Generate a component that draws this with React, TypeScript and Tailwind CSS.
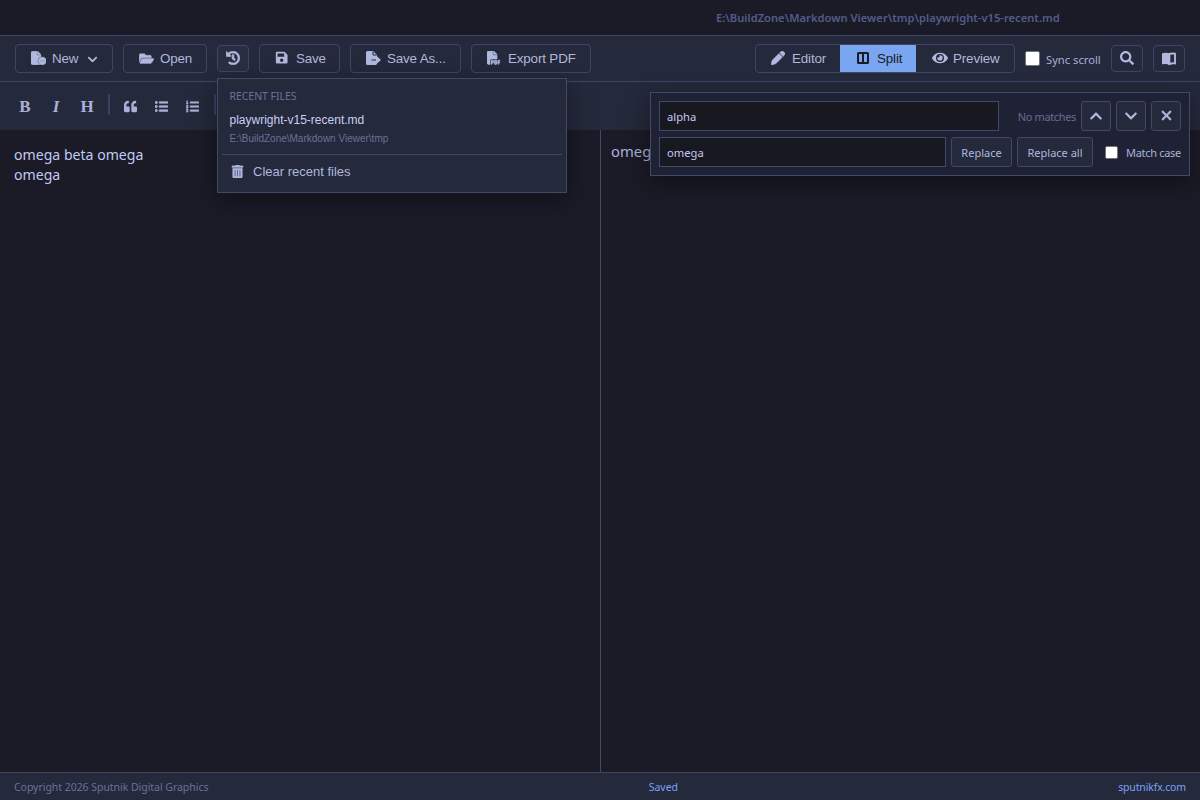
import { useState } from 'react'
import type { ReactNode } from 'react'
import { FaFileCircleMinus, FaFilePdf, FaPen, FaXmark } from 'react-icons/fa6'
import {
  FaChevronDown, FaChevronUp, FaEye, FaFolderOpen, FaHistory, FaListOl, FaListUl,
  FaQuoteLeft, FaSave, FaSearch, FaTrashAlt,
} from 'react-icons/fa'
import clsx from 'clsx'

const RECENT_DIR = 'E:\\BuildZone\\Markdown Viewer\\tmp'
const RECENT_FILE = 'playwright-v15-recent.md'

// ─── Icons the pack lacks ────────────────────────────────────────────────────
function SplitIcon() {
  return (
    <svg viewBox="0 0 12 12" className="-mt-0.5 h-3 w-3" fill="none" stroke="currentColor" strokeWidth="2" aria-hidden>
      <rect x="1" y="1" width="10" height="10" rx="0.6" />
      <path d="M6 1v10" />
    </svg>
  )
}

function ReaderIcon() {
  return (
    <svg viewBox="0 0 14 14" className="h-3.5 w-3.5" aria-hidden>
      <path d="M0 1.3Q4 0 7.5 1.3V12.7Q4 11.4 0 12.2Z" fill="currentColor" />
      <path d="M7.4 2Q10 1.2 13 1.8V11.4Q10 11 7.4 12Z" fill="none" stroke="currentColor" strokeWidth="1.9" />
    </svg>
  )
}

function SaveAsIcon() {
  return (
    <svg viewBox="0 0 15 14" className="h-3.5 w-[15px] shrink-0" aria-hidden>
      <path d="M1.5 0H7L11 4V5.2L15 9L11 12.6Q11 14 9.5 14H1.5Q0 14 0 12.5V1.5Q0 0 1.5 0Z" fill="currentColor" />
      <path d="M7 .5V4H10.6M5.5 9H10" fill="none" stroke="#24293b" strokeWidth="1" />
    </svg>
  )
}

// ─── Shared controls ─────────────────────────────────────────────────────────
function ToolButton({ icon, className, children }: { icon: ReactNode; className: string; children: ReactNode }) {
  return (
    <button className={clsx('flex h-[29px] shrink-0 items-center gap-[7px] whitespace-nowrap rounded border border-[#3f4663] pl-[15px] pt-px text-[13.4px] tracking-[-0.15px] text-[#b0b8dd]', className)}>
      <span className="-mt-0.5 flex w-3.5 justify-center">{icon}</span>
      {children}
    </button>
  )
}

function IconButton({ label, className, children }: { label: string; className?: string; children: ReactNode }) {
  return (
    <button aria-label={label} className={clsx('flex h-[27px] w-8 shrink-0 items-center justify-center rounded border border-[#3f4663] text-sm text-[#b0b8dd]', className)}>
      {children}
    </button>
  )
}

function CheckBox({ checked, onChange, className }: { checked: boolean; onChange: () => void; className: string }) {
  return (
    <button
      role="checkbox"
      aria-checked={checked}
      onClick={onChange}
      className={clsx('shrink-0 rounded-[2px] border border-[#767676]', checked ? 'bg-[#7aa2f7]' : 'bg-white', className)}
    />
  )
}

// ─── Recent files menu ───────────────────────────────────────────────────────
function RecentMenu() {
  return (
    <div className="absolute left-0 top-[33px] z-20 flex h-[115px] w-[350px] flex-col border border-[#414868] bg-[#24293b] px-1 shadow-[0_8px_22px_rgba(0,0,0,0.4)]">
      <div className="mt-[9px] pl-[7.5px] font-['Noto_Sans',sans-serif] text-[10.5px] leading-4 tracking-[-0.05px] text-[#6a7299]">RECENT FILES</div>
      <div className="mt-2 pl-[7.5px] text-xs leading-4 text-[#c8d0f5]">{RECENT_FILE}</div>
      <div className="mt-[3px] pl-[7.5px] text-[10px] leading-4 text-[#6a7299]">{RECENT_DIR}</div>
      <div className="mt-[7px] h-px bg-[#414868]" />
      <button className="mt-2 flex h-[18px] items-center gap-[9px] pl-[9px] text-[13px] text-[#b0b8dd]">
        <FaTrashAlt className="-mt-px h-[13px] w-[13px] stroke-current stroke-[12]" aria-hidden />
        Clear recent files
      </button>
    </div>
  )
}

// ─── Find and replace ────────────────────────────────────────────────────────
function FindPanel() {
  const [find, setFind] = useState('alpha')
  const [replace, setReplace] = useState('omega')
  const [matchCase, setMatchCase] = useState(false)

  const field = 'h-[30px] border border-[#414868] bg-[#181821] px-[7px] text-[11.2px] text-[#c0caf5] outline-none'
  const action = 'flex h-[30px] shrink-0 items-center justify-center whitespace-nowrap rounded-[3px] border border-[#414868] bg-[#24293b] text-[11px] text-[#b0b8dd]'

  return (
    <div className="absolute right-[10px] top-[10px] z-10 flex h-[84px] w-[540px] flex-col gap-1.5 border border-[#414868] bg-[#1f2235] p-2 font-['Noto_Sans',sans-serif] shadow-[0_8px_22px_rgba(0,0,0,0.4)]">
      <div className="flex items-center gap-[5px]">
        <input className={clsx(field, 'w-[340px]')} value={find} onChange={e => setFind(e.target.value)} aria-label="Find" />
        <span className="flex-1 whitespace-nowrap pt-0.5 text-right text-[11px] tracking-[-0.35px] text-[#656d94]">No matches</span>
        <button className={clsx(action, 'w-[30px]')} aria-label="Previous match"><FaChevronUp className="h-3.5 w-3.5" /></button>
        <button className={clsx(action, 'w-[30px]')} aria-label="Next match"><FaChevronDown className="h-3.5 w-3.5" /></button>
        <button className={clsx(action, 'w-[30px]')} aria-label="Close"><FaXmark className="-mt-px h-[15px] w-[15px] stroke-current stroke-[12]" /></button>
      </div>
      <div className="flex items-center gap-[5px]">
        <input className={clsx(field, 'w-[287px] shrink-0')} value={replace} onChange={e => setReplace(e.target.value)} aria-label="Replace with" />
        <button className={clsx(action, 'w-[61px] pt-0.5')}>Replace</button>
        <button className={clsx(action, 'w-[76px] pt-0.5')}>Replace all</button>
        <CheckBox checked={matchCase} onChange={() => setMatchCase(!matchCase)} className="ml-[7px] h-[13px] w-[13px]" />
        <span className="ml-[3px] whitespace-nowrap pt-0.5 text-[11px] tracking-[-0.3px] text-[#a9b1d6]">Match case</span>
      </div>
    </div>
  )
}

function Toolbar() {
  const [sync, setSync] = useState(false)

  return (
    <div className="flex h-[46px] shrink-0 items-center justify-between border-b border-[#3f4663] px-[15px]">
      <div className="flex items-center gap-2.5">
        <ToolButton className="w-[98px]" icon={<FaFileCircleMinus className="ml-px h-3.5 w-[15px] shrink-0 stroke-current stroke-[28]" />}>
          New
          <FaChevronDown className="ml-0.5 h-[11px] w-[11px]" aria-hidden />
        </ToolButton>
        <ToolButton className="w-[84px]" icon={<FaFolderOpen className="h-[13px] w-[15px] shrink-0 stroke-current stroke-[16]" />}>Open</ToolButton>
        <div className="relative">
          <IconButton label="Recent files" className="bg-[#292e42]"><FaHistory className="-mt-px stroke-current stroke-[24]" /></IconButton>
          <RecentMenu />
        </div>
        <ToolButton className="w-[81px]" icon={<FaSave />}>Save</ToolButton>
        <ToolButton className="w-[111px]" icon={<SaveAsIcon />}>Save As...</ToolButton>
        <ToolButton className="w-[120px]" icon={<FaFilePdf className="stroke-current stroke-[26]" />}>Export PDF</ToolButton>
      </div>

      <div className="flex items-center">
        <div className="flex h-[29px] w-[260px] overflow-hidden rounded border border-[#3f4663] text-[13.4px] tracking-[-0.15px] text-[#b0b8dd]">
          <button className="flex w-[84px] items-center gap-[7px] pl-[15px] pt-px"><FaPen className="-mt-0.5 h-3.5 w-3.5 stroke-current stroke-[16]" />Editor</button>
          <button className="-my-px flex w-[76px] items-center gap-2 bg-[#7aa5f0] pl-[17px] pt-px text-[#1a1b26]"><SplitIcon />Split</button>
          <button className="flex items-center gap-[5px] pl-4 pt-px"><FaEye className="-mt-0.5 h-4 w-4" />Preview</button>
        </div>
        <CheckBox checked={sync} onChange={() => setSync(!sync)} className="ml-[10px] h-[15px] w-[15px]" />
        <span className="ml-1.5 w-[65px] whitespace-nowrap pt-[3px] font-['Noto_Sans',sans-serif] text-[11.2px] text-[#a9b1d6]">Sync scroll</span>
        <IconButton label="Find"><FaSearch className="-mt-px" /></IconButton>
        <IconButton label="Reading mode" className="ml-2.5"><ReaderIcon /></IconButton>
      </div>
    </div>
  )
}

const FORMATS: { label: string; node: ReactNode }[][] = [
  [
    { label: 'Bold', node: 'B' },
    { label: 'Italic', node: <i>I</i> },
    { label: 'Heading', node: 'H' },
  ],
  [
    { label: 'Quote', node: <FaQuoteLeft className="h-[13px] w-[13px]" /> },
    { label: 'Bulleted list', node: <FaListUl className="h-[13px] w-[13px] stroke-current stroke-[24]" /> },
    { label: 'Numbered list', node: <FaListOl className="h-[13px] w-[13px] stroke-current stroke-[18]" /> },
  ],
]

function FormatBar() {
  return (
    <div className="flex h-12 shrink-0 items-center pl-[9px] text-sm text-[#a9b1d6]">
      {FORMATS.map((group, g) => (
        <div key={g} className="flex items-center">
          {group.map(({ label, node }) => (
            <button
              key={label}
              aria-label={label}
              className={clsx('flex h-7 w-[31px] items-center justify-center', g === 0 && "pl-px pt-0.5 font-['Liberation_Serif',serif] text-[17px] font-bold")}
            >
              {node}
            </button>
          ))}
          <div className="-mt-1 ml-1.5 mr-[5px] h-[21px] w-0.5 bg-[#3b4261]" />
        </div>
      ))}
    </div>
  )
}

export default function App() {
  return (
    <div className="flex h-[800px] w-[1200px] flex-col overflow-hidden bg-[#1a1b26] font-['Liberation_Sans',Arial,sans-serif]">
      <header className="flex h-9 shrink-0 items-center border-b border-[#3f4663] pl-[716px] pt-0.5 font-['Noto_Sans',sans-serif] text-[11.2px] font-semibold text-[#545c8a]">
        {RECENT_DIR}\{RECENT_FILE}
      </header>

      <div className="bg-[#24293b]">
        <Toolbar />
        <div className="relative">
          <FormatBar />
          <FindPanel />
        </div>
      </div>

      <main className="flex min-h-0 flex-1 font-['Noto_Sans',sans-serif] text-[#c0caf5]">
        <div className="w-[600px] px-3.5 pt-[15px] text-[14.1px] leading-5">
          omega beta omega
          <br />
          omega
        </div>
        <div className="flex-1 border-l border-[#414868] px-2.5 pt-[11px] text-[14.8px] leading-5 text-[#a9b1d6]">omega beta omega</div>
      </main>

      <footer className="grid h-7 shrink-0 grid-cols-3 items-center border-t border-[#3f4663] bg-[#24293b] px-3.5 pt-0.5 font-['Noto_Sans',sans-serif] text-[10.5px] text-[#6a7299]">
        <span className="tracking-[-0.04px]">Copyright 2026 Sputnik Digital Graphics</span>
        <span className="pl-[244px] text-[#7aa2f7]">Saved</span>
        <span className="text-right tracking-[-0.15px] text-[#7aa2f7]">sputnikfx.com</span>
      </footer>
    </div>
  )
}
